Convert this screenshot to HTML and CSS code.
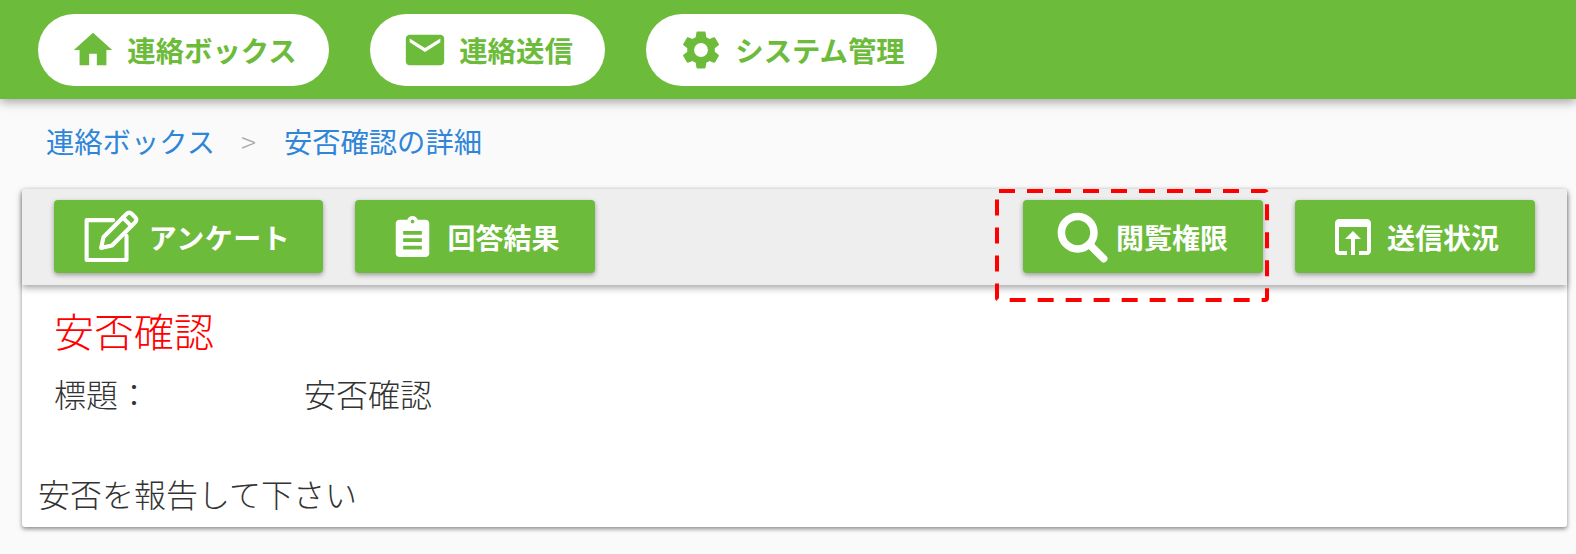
FILE: index.html
```html
<!DOCTYPE html>
<html lang="ja">
<head>
<meta charset="utf-8">
<title>安否確認の詳細</title>
<link rel="stylesheet" href="styles.css">
</head>
<body>
<header class="topbar">
  <a class="pill pill-box"><svg class="pill-icon" viewBox="0 0 24 24"><path d="M10 20v-6h4v6h5v-8h3L12 3 2 12h3v8z"/></svg>連絡ボックス</a>
  <a class="pill pill-send"><svg class="pill-icon" viewBox="0 0 24 24"><path d="M20 4H4c-1.1 0-2 .9-2 2v12c0 1.1.9 2 2 2h16c1.1 0 2-.9 2-2V6c0-1.1-.9-2-2-2zm0 4-8 5-8-5V6l8 5 8-5v2z"/></svg>連絡送信</a>
  <a class="pill pill-sys"><svg class="pill-icon" viewBox="0 0 24 24"><path d="M19.14 12.94c.04-.3.06-.61.06-.94 0-.32-.02-.64-.07-.94l2.03-1.58a.49.49 0 0 0 .12-.61l-1.92-3.32a.49.49 0 0 0-.59-.22l-2.39.96c-.5-.38-1.03-.7-1.62-.94l-.36-2.54a.48.48 0 0 0-.48-.41h-3.84c-.24 0-.43.17-.47.41l-.36 2.54c-.59.24-1.13.57-1.62.94l-2.39-.96c-.22-.08-.47 0-.59.22L2.74 8.87c-.12.21-.08.47.12.61l2.03 1.58c-.05.3-.09.63-.09.94s.02.64.07.94l-2.03 1.58a.49.49 0 0 0-.12.61l1.92 3.32c.12.22.37.29.59.22l2.39-.96c.5.38 1.03.7 1.62.94l.36 2.54c.05.24.24.41.48.41h3.84c.24 0 .44-.17.47-.41l.36-2.54c.59-.24 1.13-.56 1.62-.94l2.39.96c.22.08.47 0 .59-.22l1.92-3.32c.12-.22.07-.47-.12-.61l-2.01-1.58zM12 15.6A3.6 3.6 0 1 1 12 8.4a3.6 3.6 0 0 1 0 7.2z"/></svg>システム管理</a>
</header>

<nav class="crumbs">
  <a class="crumb">連絡ボックス</a>
  <span class="crumb-sep">&gt;</span>
  <a class="crumb">安否確認の詳細</a>
</nav>

<main class="card">
  <div class="toolbar">
    <a class="btn btn-survey"><svg class="btn-icon icon-edit" viewBox="0 0 48 48" fill="none" stroke="#fff" stroke-width="3.4" stroke-linejoin="round" stroke-linecap="round"><path d="M25 10H3v33h33V23"/><path d="M15 33l2-9L36 5c1.500-1.500 3-1.500 4.500 0l2.500 2.500c1.500 1.500 1.500 3 0 4.500L24 31z"/><path d="M33 8l7 7"/></svg>アンケート</a>
    <a class="btn btn-result"><svg class="btn-icon icon-clip" viewBox="3 1 18 22"><path d="M19 3h-4.180C14.400 1.840 13.300 1 12 1s-2.400.84-2.820 2H5c-1.100 0-2 .9-2 2v16c0 1.100.9 2 2 2h14c1.100 0 2-.9 2-2V5c0-1.100-.9-2-2-2zm-7 0c.55 0 1 .45 1 1s-.45 1-1 1-1-.45-1-1 .45-1 1-1zm5 16H7v-2h10v2zm0-4H7v-2h10v2zm0-4H7V9h10v2z"/></svg>回答結果</a>
    <a class="btn btn-perm"><svg class="btn-icon icon-search" viewBox="0 0 48 48" fill="none" stroke="#fff" stroke-linecap="round"><circle cx="20" cy="20" r="15" stroke-width="7"/><path d="M32 32l12 12" stroke-width="7"/></svg>閲覧権限</a>
    <a class="btn btn-status"><svg class="btn-icon icon-upload" viewBox="3 3 18 18"><path d="M19 3H5c-1.110 0-2 .9-2 2v14c0 1.100.89 2 2 2h4v-2H5V7h14v12h-4v2h4c1.100 0 2-.9 2-2V5c0-1.100-.89-2-2-2zm-7 6-4 4h3v8h2v-8h3z"/></svg>送信状況</a>
    <svg class="highlight" viewBox="0 0 274 113"><rect x="2" y="2" width="270" height="109" rx="2"/></svg>
  </div>
  <div class="content">
    <h1 class="title">安否確認</h1>
    <div class="field"><span class="field-label">標題：</span><span>安否確認</span></div>
    <p class="message">安否を報告して下さい</p>
  </div>
</main>
</body>
</html>
```

FILE: styles.css
```css
* { box-sizing: border-box; }

html, body { height: 100%; }

body {
  margin: 0;
  background: #fafafa;
  color: #333;
  font-family: "Noto Sans CJK JP", "Noto Sans", sans-serif;
  font-weight: 300;
  overflow: hidden;
}

.topbar {
  display: flex;
  gap: 41px;
  height: 99px;
  padding: 14px 38px 0;
  background: #6cbb3a;
  box-shadow: 0 3px 10px rgba(0, 0, 0, .35);
}

.pill {
  display: flex;
  align-items: center;
  justify-content: center;
  gap: 11px;
  height: 72px;
  background: #fff;
  border-radius: 36px;
  color: #6cbb3a;
  font-size: 28.400px;
  font-weight: 700;
  line-height: 1;
}

.pill-box { width: 291px; }
.pill-send { width: 235px; }
.pill-sys { width: 291px; }

.pill-icon {
  flex: none;
  width: 46px;
  height: 46px;
  fill: #6cbb3a;
}

.crumbs {
  display: flex;
  align-items: center;
  height: 90px;
  padding: 0 0 6px 46px;
  font-size: 28.300px;
  font-weight: 400;
  line-height: 1;
}

.crumb { color: #2f86d8; }

.crumb-sep {
  margin: 0 28px 0 26px;
  color: #aaa;
  font-size: 28px;
  font-weight: 300;
}

.card {
  position: relative;
  height: 338px;
  margin: 0 9px 0 22px;
  background: #fff;
  border-radius: 3px;
  box-shadow: 0 2px 4px rgba(0, 0, 0, .45);
}

.toolbar {
  position: relative;
  display: flex;
  gap: 32px;
  height: 96px;
  padding: 11px 32px 0 32px;
  background: #eee;
  border-radius: 3px 3px 0 0;
  box-shadow: 0 3px 7px rgba(0, 0, 0, .35);
}

.btn {
  display: flex;
  align-items: center;
  justify-content: center;
  gap: 8px;
  height: 73px;
  background: #6cbb3a;
  border-radius: 4px;
  box-shadow: 0 2px 5px rgba(0, 0, 0, .35);
  color: #fff;
  font-size: 28px;
  font-weight: 700;
  line-height: 1;
}

.btn-survey { width: 269px; letter-spacing: .5px; }
.btn-result { width: 240px; padding-left: 4px; }
.btn-perm { width: 240px; margin-left: auto; }
.btn-status { width: 240px; padding-left: 4px; }

.btn-icon {
  flex: none;
  fill: #fff;
}

.icon-edit { width: 58px; height: 58px; fill: none; margin-left: -4px; }
.icon-clip { width: 37px; height: 41px; margin-right: 8px; }
.icon-search { width: 52px; height: 52px; fill: none; margin-left: -2px; }
.icon-upload { width: 36px; height: 36px; margin-right: 8px; }

.highlight {
  position: absolute;
  left: 973px;
  top: 0;
  width: 274px;
  height: 113px;
  fill: none;
  stroke: #f00;
  stroke-width: 4;
  stroke-dasharray: 16 12;
  pointer-events: none;
}

.content { padding: 0 16px; }

.title {
  margin: 0;
  padding: 19px 0 0 16px;
  color: #f00;
  font-size: 40px;
  font-weight: 300;
  line-height: 52px;
}

.field {
  display: flex;
  padding: 13px 0 0 16px;
  font-size: 32px;
  line-height: 48px;
}

.field-label { width: 250px; }

.message {
  margin: 0;
  padding-top: 52px;
  font-size: 32px;
  line-height: 48px;
}
```
